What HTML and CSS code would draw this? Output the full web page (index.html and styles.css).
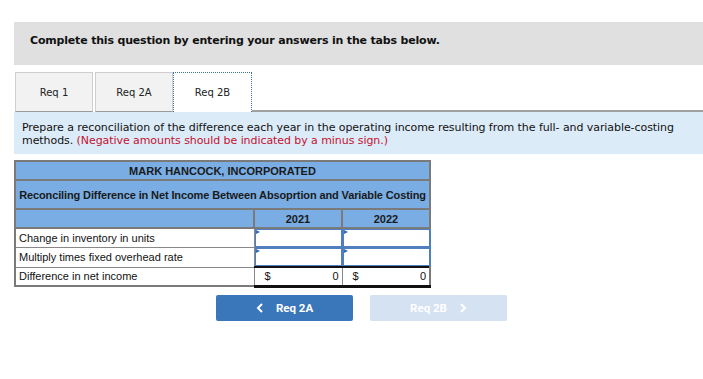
FILE: index.html
```html
<!DOCTYPE html>
<html>
<head>
<meta charset="utf-8">
<link rel="stylesheet" href="styles.css">
</head>
<body>
<div class="page">
  <div class="banner">Complete this question by entering your answers in the tabs below.</div>
  <div class="tabs">
    <div class="tab">Req 1</div>
    <div class="tab">Req 2A</div>
    <div class="tab active">Req 2B</div>
    <div class="tab-rest"></div>
  </div>
  <div class="instr">Prepare a reconciliation of the difference each year in the operating income resulting from the full- and variable-costing methods. <span class="red">(Negative amounts should be indicated by a minus sign.)</span></div>
  <table class="sheet">
    <tr class="h1"><th colspan="3">MARK HANCOCK, INCORPORATED</th></tr>
    <tr class="h2"><th colspan="3">Reconciling Difference in Net Income Between Absoprtion and Variable Costing</th></tr>
    <tr class="h3"><th class="blank"></th><th class="yr">2021</th><th class="yr">2022</th></tr>
    <tr class="row"><td class="lbl">Change in inventory in units</td><td class="inp"><div class="box"></div></td><td class="inp"><div class="box"></div></td></tr>
    <tr class="row"><td class="lbl">Multiply times fixed overhead rate</td><td class="inp"><div class="box"></div></td><td class="inp"><div class="box"></div></td></tr>
    <tr class="row total"><td class="lbl">Difference in net income</td><td class="val"><span class="cur">$</span><span>0</span></td><td class="val"><span class="cur">$</span><span>0</span></td></tr>
  </table>
  <div class="nav">
    <div class="btn prev"><svg class="chev" width="8" height="10" viewBox="0 0 8 10"><path d="M6 1 L2 5 L6 9" fill="none" stroke="#fff" stroke-width="2"/></svg>Req 2A</div>
    <div class="btn next">Req 2B<svg class="chev r" width="8" height="10" viewBox="0 0 8 10"><path d="M2 1 L6 5 L2 9" fill="none" stroke="#fff" stroke-width="2"/></svg></div>
  </div>
</div>
</body>
</html>
```
FILE: styles.css
```css
* { box-sizing: border-box; }
body { margin: 0; background: #fff; font-family: "DejaVu Sans", Verdana, sans-serif; color: #111; }
.page { padding-left: 14px; padding-top: 22px; }
.banner {
  height: 43px; background: #e0e0e0; padding-left: 16px;
  font-weight: bold; font-size: 11px; letter-spacing: -0.18px; line-height: 37px; color: #111;
}
.tabs { display: flex; margin-top: 7px; height: 40px; margin-left: 1px; }
.tab {
  width: 78px; height: 40px; background: #f2f2f2;
  border: 1px solid #cfcfcf; border-bottom: 1px solid #999;
  display: flex; align-items: center; justify-content: center;
  font-size: 10px; color: #222;
}
.tab + .tab { margin-left: 2px; }
.tab.active { margin-left: 0; width: 79px; background: #fff; border: 1px dotted #3d6ea8; border-bottom: none; }
.tab-rest { flex: 1; border-bottom: 2px solid #a0a0a0; }
.instr {
  background: #dcebf8; height: 42px; padding: 9px 0 0 8px;
  font-size: 11px; letter-spacing: -0.07px; line-height: 13px; color: #111;
}
.red { color: #c41230; }
.sheet {
  margin-top: 6px; border-collapse: collapse; width: 417px;
  font-family: "Liberation Sans", Arial, sans-serif; font-size: 11px;
}
.sheet th { background: #79ade3; border: 2px solid #7a7a7a; font-weight: bold; color: #1a1a1a; padding: 0; white-space: nowrap; }
.h1 th { height: 19px; }
.h2 th { height: 29px; letter-spacing: -0.12px; }
.h3 th { height: 19px; }
.h3 th.yr { width: 88px; }
.sheet td { border: 1px solid #888; height: 19px; padding: 0; }
.lbl { padding-left: 3px !important; color: #111; border-left: 2px solid #7a7a7a !important; }
.inp { border: 1px solid #4f7fbf !important; padding: 0; height: 19px; }
.box { height: 18px; border: 1px solid #4f7fbf; position: relative; background: #fff; }
.box::before {
  content: ""; position: absolute; left: 0; top: 0;
  border-left: 4px solid #2f6cc0; border-top: 2px solid transparent; border-bottom: 2px solid transparent;
}
.val { border-top: 2px solid #111 !important; border-bottom: 3px solid #111 !important; }
.val { padding: 0 3px 0 10px !important; }
.val span { display: inline-block; }
.val .cur { float: left; }
.val { text-align: right; }
.sheet tr td:last-child { border-right: 2px solid #7a7a7a; }
.total .lbl { border-bottom: 2px solid #7a7a7a; }
.nav { display: flex; gap: 17px; margin-top: 7px; padding-left: 202px; }
.btn {
  width: 137px; height: 26px; border-radius: 2px;
  display: flex; align-items: center; justify-content: center;
  font-family: Roboto, "Liberation Sans", sans-serif; font-weight: bold; font-size: 11.5px; color: #fff;
}
.btn.prev { background: #3a76ba; }
.btn.next { background: #d5e2f1; }
.chev { margin-right: 12px; }
.chev.r { margin-right: 0; margin-left: 12px; }
```
